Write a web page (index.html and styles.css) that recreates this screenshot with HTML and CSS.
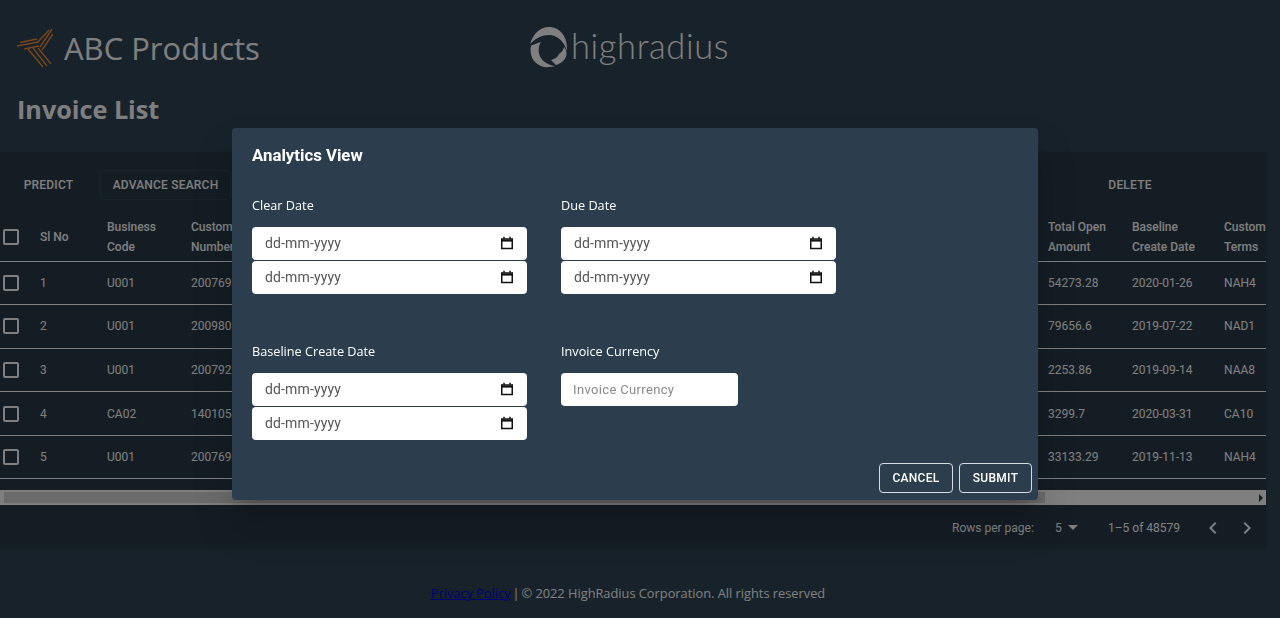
FILE: index.html
```html
<!DOCTYPE html>
<html lang="en">
<head>
    <meta charset="UTF-8">
    <meta name="viewport" content="width=device-width, initial-scale=1.0">
    <title>Invoice List</title>
    <link rel="stylesheet" href="styles.css">
</head>
<body>
    <header class="top">
        <div class="brand">
            <svg class="abc-logo" width="36" height="42" viewBox="0 0 36 42" fill="none" stroke="#ee8c34" stroke-width="1.4">
                <path d="M0 18 L21 14"/>
                <path d="M3 14.5 L20 11"/>
                <path d="M7 21 L22 18"/>
                <path d="M23 19 L35 1"/>
                <path d="M20 15 L32 2"/>
                <path d="M25 22 L36 6"/>
                <path d="M11 21 L26 39"/>
                <path d="M16 20 L30 38"/>
                <path d="M21 20 L34 36"/>
            </svg>
            <span class="brand-name">ABC Products</span>
        </div>
        <div class="hr-logo">
            <svg width="40" height="42" viewBox="0 0 40 42" fill="#fff">
                <path d="M1 17 C4 7 11 0 20 0 C31 0 39 10 38 24 C35 14 28 8 20 8 C13 8 7 11 1 17Z"/>
                <path d="M12 15 C6 17 3 18 2 19 C0 27 4 36 12 39 C17 41 22 40 26 39 C18 38 11 33 10 26 C9 22 10 18 12 15Z"/>
                <path d="M35 20 C39 24 38 31 34 34 C32 36 29 37.5 27 38 L22 33 C26 32 29 30 30 27 C33 25 34 23 35 20Z"/>
            </svg>
            <span class="hr-name">highradius</span>
        </div>
    </header>

    <h1 class="page-title">Invoice List</h1>

    <section class="card">
        <div class="toolbar">
            <button class="tool-btn predict">PREDICT</button>
            <button class="tool-btn advance">ADVANCE SEARCH</button>
            <button class="tool-btn delete">DELETE</button>
        </div>

        <table class="grid">
            <colgroup>
                <col class="c-check"><col class="c-sl"><col class="c-code"><col class="c-num">
                <col class="c-fill"><col class="c-open"><col class="c-base"><col class="c-terms">
            </colgroup>
            <thead>
                <tr>
                    <th><span class="box"></span></th>
                    <th>Sl No</th>
                    <th>Business<br>Code</th>
                    <th>Customer<br>Number</th>
                    <th></th>
                    <th>Total Open<br>Amount</th>
                    <th>Baseline<br>Create Date</th>
                    <th>Customer<br>Terms</th>
                </tr>
            </thead>
            <tbody>
                <tr><td><span class="box"></span></td><td>1</td><td>U001</td><td>200769623</td><td></td><td>54273.28</td><td>2020-01-26</td><td>NAH4</td></tr>
                <tr><td><span class="box"></span></td><td>2</td><td>U001</td><td>200980828</td><td></td><td>79656.6</td><td>2019-07-22</td><td>NAD1</td></tr>
                <tr><td><span class="box"></span></td><td>3</td><td>U001</td><td>200792734</td><td></td><td>2253.86</td><td>2019-09-14</td><td>NAA8</td></tr>
                <tr><td><span class="box"></span></td><td>4</td><td>CA02</td><td>140105686</td><td></td><td>3299.7</td><td>2020-03-31</td><td>CA10</td></tr>
                <tr><td><span class="box"></span></td><td>5</td><td>U001</td><td>200769623</td><td></td><td>33133.29</td><td>2019-11-13</td><td>NAH4</td></tr>
            </tbody>
        </table>

        <div class="scrollbar">
            <div class="scroll-thumb"></div>
            <span class="scroll-arrow"></span>
        </div>

        <div class="pager">
            <span class="pager-label">Rows per page:</span>
            <span class="pager-size">5 <i class="caret"></i></span>
            <span class="pager-range">1–5 of 48579</span>
            <svg class="chev" width="24" height="24" viewBox="0 0 24 24" fill="#fff"><path d="M15.41 7.41 14 6l-6 6 6 6 1.41-1.41L10.83 12z"/></svg>
            <svg class="chev" width="24" height="24" viewBox="0 0 24 24" fill="#fff"><path d="M10 6 8.59 7.41 13.17 12l-4.58 4.59L10 18l6-6z"/></svg>
        </div>
    </section>

    <footer class="foot">
        <a href="#">Privacy Policy</a> <span class="sep">|</span> © 2022 HighRadius Corporation. All rights reserved
    </footer>

    <div class="backdrop"></div>

    <div class="modal">
        <h2 class="modal-title">Analytics View</h2>
        <div class="fields">
            <div class="field">
                <label>Clear Date</label>
                <div class="date-input"><span>dd-mm-yyyy</span><svg width="14" height="14" viewBox="0 0 14 14" fill="none" stroke="#111" stroke-width="1.5"><path d="M1.75 3h10.5v9.5H1.75z"/><path d="M1.75 4.6h10.5" stroke-width="2"/><path d="M4 .8v2M10 .8v2"/></svg></div>
                <div class="date-input"><span>dd-mm-yyyy</span><svg width="14" height="14" viewBox="0 0 14 14" fill="none" stroke="#111" stroke-width="1.5"><path d="M1.75 3h10.5v9.5H1.75z"/><path d="M1.75 4.6h10.5" stroke-width="2"/><path d="M4 .8v2M10 .8v2"/></svg></div>
            </div>
            <div class="field">
                <label>Due Date</label>
                <div class="date-input"><span>dd-mm-yyyy</span><svg width="14" height="14" viewBox="0 0 14 14" fill="none" stroke="#111" stroke-width="1.5"><path d="M1.75 3h10.5v9.5H1.75z"/><path d="M1.75 4.6h10.5" stroke-width="2"/><path d="M4 .8v2M10 .8v2"/></svg></div>
                <div class="date-input"><span>dd-mm-yyyy</span><svg width="14" height="14" viewBox="0 0 14 14" fill="none" stroke="#111" stroke-width="1.5"><path d="M1.75 3h10.5v9.5H1.75z"/><path d="M1.75 4.6h10.5" stroke-width="2"/><path d="M4 .8v2M10 .8v2"/></svg></div>
            </div>
            <div class="field">
                <label>Baseline Create Date</label>
                <div class="date-input"><span>dd-mm-yyyy</span><svg width="14" height="14" viewBox="0 0 14 14" fill="none" stroke="#111" stroke-width="1.5"><path d="M1.75 3h10.5v9.5H1.75z"/><path d="M1.75 4.6h10.5" stroke-width="2"/><path d="M4 .8v2M10 .8v2"/></svg></div>
                <div class="date-input"><span>dd-mm-yyyy</span><svg width="14" height="14" viewBox="0 0 14 14" fill="none" stroke="#111" stroke-width="1.5"><path d="M1.75 3h10.5v9.5H1.75z"/><path d="M1.75 4.6h10.5" stroke-width="2"/><path d="M4 .8v2M10 .8v2"/></svg></div>
            </div>
            <div class="field">
                <label>Invoice Currency</label>
                <input class="text-input" type="text" placeholder="Invoice Currency">
            </div>
        </div>
        <div class="actions">
            <button class="outline-btn">CANCEL</button>
            <button class="outline-btn submit">SUBMIT</button>
        </div>
    </div>
</body>
</html>
```

FILE: styles.css
```css
* {
    box-sizing: border-box;
}
html, body {
    height: 100%;
}
body {
    margin: 0;
    overflow: hidden;
    background-color: #2f4554;
    color: #fff;
    font-family: "Open Sans", sans-serif;
}

/* header */
.top {
    display: flex;
    height: 95px;
    padding: 27px 0 0 17px;
}
.brand {
    display: flex;
    align-items: flex-start;
    width: 512px;
}
.abc-logo {
    margin-top: 1px;
}
.brand-name {
    margin-left: 11px;
    font-size: 31px;
    line-height: 42px;
    color: #fff;
}
.hr-logo {
    display: flex;
    align-items: flex-start;
}
.hr-name {
    margin-left: 2px;
    font-family: Lato, sans-serif;
    font-weight: 300;
    font-size: 34.5px;
    line-height: 38px;
    letter-spacing: 0.6px;
    color: #fff;
}
.page-title {
    margin: 0;
    padding-left: 17px;
    height: 57px;
    font-size: 25.2px;
    line-height: 28px;
    font-weight: 700;
    color: #fff;
}

/* table card */
.card {
    width: 1266px;
    height: 396px;
    background-color: #283b49;
    font-family: Roboto, sans-serif;
    box-shadow: 0 1px 3px rgba(0, 0, 0, 0.2);
}
.toolbar {
    display: flex;
    height: 62px;
    padding-top: 18px;
}
.tool-btn {
    height: 30px;
    border: 1px solid transparent;
    border-radius: 4px;
    background: none;
    color: #fff;
    font-family: Roboto, sans-serif;
    font-weight: 500;
    font-size: 12px;
    letter-spacing: 0.2px;
}
.predict {
    width: 97px;
}
.advance {
    width: 131px;
    margin-left: 3px;
    border-color: #2f4858;
}
.delete {
    width: 118px;
    margin-left: auto;
    margin-right: 77px;
}

.grid {
    width: 1266px;
    table-layout: fixed;
    border-collapse: collapse;
    font-size: 12px;
    color: #fff;
}
.c-check { width: 40px; }
.c-sl { width: 67px; }
.c-code { width: 84px; }
.c-num { width: 84px; }
.c-open { width: 84px; }
.c-base { width: 92px; }
.c-terms { width: 42px; }
.grid th {
    height: 47px;
    padding: 0;
    text-align: left;
    vertical-align: middle;
    font-weight: 500;
    line-height: 20px;
    white-space: nowrap;
    overflow: hidden;
    border-bottom: 1px solid #fff;
}
.grid td {
    height: 43.6px;
    padding: 0;
    white-space: nowrap;
    overflow: hidden;
    border-bottom: 1px solid #fff;
}
.box {
    display: block;
    width: 16px;
    height: 16px;
    margin-left: 3px;
    border: 2px solid #fff;
    border-radius: 2px;
}

.scrollbar {
    display: flex;
    align-items: center;
    justify-content: space-between;
    height: 15px;
    margin-top: 11px;
    padding-left: 4px;
    background-color: #fff;
}
.scroll-thumb {
    width: 1041px;
    height: 11px;
    background-color: #d6d6d6;
}
.scroll-arrow {
    margin-right: 3px;
    border-left: 4px solid #283b49;
    border-top: 4px solid transparent;
    border-bottom: 4px solid transparent;
}

.pager {
    display: flex;
    align-items: center;
    height: 43px;
    padding: 2px 0 0 952px;
    font-size: 12px;
    color: #fff;
}
.pager-label {
    flex: none;
    width: 102px;
}
.pager-size {
    flex: none;
    display: flex;
    align-items: center;
    width: 54px;
    padding-left: 1px;
}
.caret {
    margin-left: 6px;
    border-top: 5px solid #fff;
    border-left: 5px solid transparent;
    border-right: 5px solid transparent;
}
.pager-range {
    flex: none;
    width: 93px;
}
.chev {
    flex: none;
    margin-right: 10px;
}

/* footer */
.foot {
    width: 1256px;
    margin-top: 35px;
    text-align: center;
    font-size: 12.8px;
    line-height: 20px;
    color: #fff;
}
.foot a {
    color: #0000ee;
}
.sep {
    margin: 0 -1.5px;
}

/* dialog */
.backdrop {
    position: fixed;
    top: 0;
    left: 0;
    width: 100%;
    height: 100%;
    background: rgba(0, 0, 0, 0.5);
}
.modal {
    position: absolute;
    top: 128px;
    left: 232px;
    width: 806px;
    height: 372px;
    padding: 18px 6px 7px 20px;
    display: flex;
    flex-direction: column;
    background-color: #2c3e4e;
    border-radius: 4px;
    box-shadow: 0 11px 15px -7px rgba(0, 0, 0, 0.2), 0 24px 38px 3px rgba(0, 0, 0, 0.14);
    font-family: Roboto, sans-serif;
}
.modal-title {
    margin: 0 0 31px;
    font-size: 16.8px;
    line-height: 19px;
    font-weight: 700;
}
.fields {
    display: grid;
    grid-template-columns: 275px 275px;
    column-gap: 34px;
    row-gap: 47px;
}
.field label {
    display: block;
    margin-bottom: 13px;
    font-family: "Open Sans", sans-serif;
    font-size: 12.7px;
    line-height: 18px;
}
.date-input {
    display: flex;
    align-items: center;
    justify-content: space-between;
    width: 275px;
    height: 33px;
    margin-bottom: 1px;
    padding: 0 13px 2px;
    background-color: #fff;
    border-radius: 4px;
    color: #555;
    font-size: 14px;
    letter-spacing: 0.15px;
}
.text-input {
    display: block;
    width: 177px;
    height: 33px;
    padding: 0 12px;
    border: none;
    border-radius: 4px;
    background-color: #fff;
    font-family: Roboto, sans-serif;
    font-size: 13px;
    letter-spacing: 0.35px;
}
.text-input::placeholder {
    color: #8a8a8a;
}
.actions {
    display: flex;
    justify-content: flex-end;
    gap: 6px;
    margin-top: auto;
}
.outline-btn {
    height: 30px;
    width: 74px;
    border: 1px solid #d5dde3;
    border-radius: 4px;
    background: none;
    color: #fff;
    font-family: Roboto, sans-serif;
    font-weight: 500;
    font-size: 12px;
    letter-spacing: 0.3px;
}
.submit {
    width: 73px;
}
```
